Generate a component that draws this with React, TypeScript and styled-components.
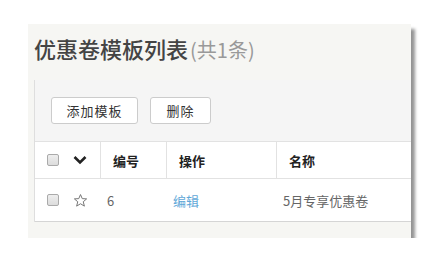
import React from "react";
import styled, { createGlobalStyle } from "styled-components";

const Global = createGlobalStyle`
  body {
    margin: 0;
    background: #fff;
    font-family: "Noto Sans CJK SC", "Noto Sans", sans-serif;
  }
`;

const Card = styled.div`
  margin: 24px 0 0 28px;
  width: 383px;
  height: 214px;
  background: #f6f6f3;
  box-shadow: 4px 5px 3px rgba(0, 0, 0, 0.42);
  overflow: hidden;
  display: flex;
  flex-direction: column;
`;

const Title = styled.div`
  height: 56px;
  box-sizing: border-box;
  padding: 9px 0 0 6px;
  font-size: 22px;
  line-height: 30px;
  font-weight: 500;
  color: #444;
  white-space: nowrap;
`;

const Count = styled.span`
  color: #999;
  font-size: 20px;
  font-weight: 400;
  margin-left: 2px;
`;

const Panel = styled.div`
  margin-left: 6px;
  border-left: 1px solid #dedede;
  background: #f5f5f5;
`;

const Toolbar = styled.div`
  height: 61px;
  box-sizing: border-box;
  padding: 17px 0 0 16px;
  display: flex;
  gap: 12px;
`;

const Button = styled.button<{ $w: number }>`
  width: ${(p) => p.$w}px;
  height: 27px;
  background: #fff;
  border: 1px solid #ccc;
  border-radius: 3px;
  font-family: inherit;
  font-size: 13px;
  letter-spacing: 1px;
  color: #333;
  padding: 0;
`;

const Table = styled.div`
  background: #fff;
  border-top: 1px solid #e2e2e2;
  border-bottom: 1px solid #d5d5d5;
`;

const Row = styled.div<{ $head?: boolean }>`
  display: grid;
  grid-template-columns: 66px 66px 110px 1fr;
  height: ${(p) => (p.$head ? 36 : 42)}px;
  border-bottom: ${(p) => (p.$head ? "1px solid #e2e2e2" : "none")};
  font-size: 13px;
  font-weight: ${(p) => (p.$head ? 700 : 400)};
  color: ${(p) => (p.$head ? "#222" : "#666")};
`;

const Cell = styled.div<{ $head?: boolean; $pad?: number }>`
  display: flex;
  align-items: center;
  padding-left: ${(p) => p.$pad ?? 0}px;
  border-right: ${(p) => (p.$head ? "1px solid #e2e2e2" : "none")};
  white-space: nowrap;
  gap: 14px;
  &:last-child {
    border-right: none;
  }
`;

const Check = styled.span`
  width: 12px;
  height: 12px;
  box-sizing: border-box;
  border: 1px solid #aaa;
  border-radius: 2px;
  background: linear-gradient(#eee, #dcdcdc);
  flex: none;
`;

const Link = styled.span`
  color: #5fa8d8;
`;

const Chevron = () => (
  <svg width="14" height="10" viewBox="0 0 14 10">
    <path d="M1.5 2 L7 7.5 L12.5 2" fill="none" stroke="#222" strokeWidth="2.6" />
  </svg>
);

const Star = () => (
  <svg width="15" height="15" viewBox="0 0 24 24">
    <path
      d="M12 2.5 L14.8 9 L21.8 9.4 L16.4 14 L18.2 21 L12 17.2 L5.8 21 L7.6 14 L2.2 9.4 L9.2 9 Z"
      fill="none"
      stroke="#777"
      strokeWidth="1.6"
      strokeLinejoin="round"
    />
  </svg>
);

export default function App() {
  return (
    <>
      <Global />
      <Card>
        <Title>
          优惠卷模板列表<Count>(共1条)</Count>
        </Title>
        <Panel>
          <Toolbar>
            <Button $w={87}>添加模板</Button>
            <Button $w={61}>删除</Button>
          </Toolbar>
          <Table>
            <Row $head>
              <Cell $head $pad={12}>
                <Check />
                <Chevron />
              </Cell>
              <Cell $head $pad={12}>编号</Cell>
              <Cell $head $pad={12}>操作</Cell>
              <Cell $head $pad={12}>名称</Cell>
            </Row>
            <Row>
              <Cell $pad={12}>
                <Check />
                <Star />
              </Cell>
              <Cell $pad={6}>6</Cell>
              <Cell $pad={6}>
                <Link>编辑</Link>
              </Cell>
              <Cell $pad={6}>5月专享优惠卷</Cell>
            </Row>
          </Table>
        </Panel>
      </Card>
    </>
  );
}
